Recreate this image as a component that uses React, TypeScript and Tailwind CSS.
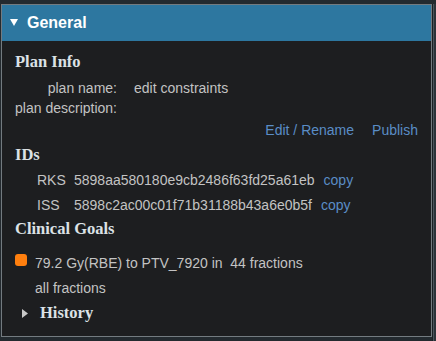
import React from "react";

const sans = { fontFamily: '"Liberation Sans", Arial, sans-serif' };

function Heading({ children, className = "" }: { children: React.ReactNode; className?: string }) {
  return (
    <div
      className={`h-[24px] leading-[24px] text-[16.5px] font-bold text-[#dce2e6] ${className}`}
      style={{ fontFamily: '"Liberation Serif", "Times New Roman", serif' }}
    >
      {children}
    </div>
  );
}

export default function App() {
  const ids = [
    { label: "RKS", hash: "5898aa580180e9cb2486f63fd25a61eb" },
    { label: "ISS", hash: "5898c2ac00c01f71b31188b43a6e0b5f" },
  ];

  return (
    <div className="w-[436px] h-[341px] bg-[#232a2f] pt-[4px] pl-[1px] flex overflow-hidden" style={sans}>
      <div className="w-[431px] h-[333px] border border-[#737b80] bg-[#1d1e20] flex flex-col">
        {/* header */}
        <div className="h-[36px] bg-[#2d77a0] flex items-center pl-[8px] shrink-0">
          <svg width="8" height="7" viewBox="0 0 8 7" className="mt-[-1px]">
            <polygon points="0,0 8,0 4,7" fill="#ffffff" />
          </svg>
          <span className="ml-[9px] text-[16px] font-bold text-white leading-none">General</span>
        </div>

        {/* body */}
        <div className="pl-[13px] pr-[13px] pt-[9px] text-[14px] text-[#c3c3c3]">
          <Heading>Plan Info</Heading>

          <div className="mt-[4px] flex h-[20px] leading-[20px]">
            <span className="w-[102px] text-right">plan name:</span>
            <span className="ml-[17px]">edit constraints</span>
          </div>
          <div className="flex h-[20px] leading-[20px]">
            <span className="w-[102px] text-right">plan description:</span>
          </div>

          <div className="mt-[2px] flex justify-end gap-[18px] h-[20px] leading-[20px] text-[#5a8dc6]">
            <span>Edit / Rename</span>
            <span>Publish</span>
          </div>

          <Heading className="mt-[3px]">IDs</Heading>

          <div className="mt-[3px] flex flex-col gap-[5px]">
            {ids.map((row) => (
              <div key={row.label} className="flex h-[20px] leading-[20px] pl-[22px]">
                <span className="w-[37px]">{row.label}</span>
                <span>{row.hash}</span>
                <span className="ml-[9px] text-[#5a8dc6]">copy</span>
              </div>
            ))}
          </div>

          <Heading className="mt-[2px]">Clinical Goals</Heading>

          <div className="mt-[12px] flex items-center h-[20px] leading-[20px]">
            <span className="w-[12px] h-[12px] rounded-[3px] bg-[#ff7f0e] mt-[-6px]" />
            <span className="ml-[8px]">
              79.2 Gy(RBE) to PTV_7920 in&nbsp; 44 fractions
            </span>
          </div>
          <div className="mt-[5px] h-[20px] leading-[20px] pl-[20px]">all fractions</div>

          <div className="mt-[3px] flex items-center h-[24px] pl-[7px]">
            <svg width="6" height="9" viewBox="0 0 6 9">
              <polygon points="0,0 6,4.5 0,9" fill="#c8c8c8" />
            </svg>
            <Heading className="ml-[12px]">History</Heading>
          </div>
        </div>
      </div>
      <div className="w-[1px] h-full bg-[#1b2024]" />
      <div className="flex-1 h-full bg-[#2b3339] border-l border-[#4a545b]" />
    </div>
  );
}
